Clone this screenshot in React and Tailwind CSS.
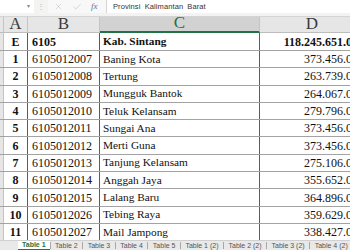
import React from "react";
import { X, Check } from "lucide-react";

const rows = [
  ["1", "6105012007", "Baning Kota", "373.456.000"],
  ["2", "6105012008", "Tertung", "263.739.000"],
  ["3", "6105012009", "Mungguk Bantok", "264.067.000"],
  ["4", "6105012010", "Teluk Kelansam", "279.796.000"],
  ["5", "6105012011", "Sungai Ana", "373.456.000"],
  ["6", "6105012012", "Merti Guna", "373.456.000"],
  ["7", "6105012013", "Tanjung Kelansam", "275.106.000"],
  ["8", "6105012014", "Anggah Jaya", "355.652.000"],
  ["9", "6105012015", "Lalang Baru", "364.896.000"],
  ["10", "6105012026", "Tebing Raya", "359.629.000"],
  ["11", "6105012027", "Mail Jampong", "338.427.000"],
];

const tabs = [
  "Table 2",
  "Table 3",
  "Table 4",
  "Table 5",
  "Table 1 (2)",
  "Table 2 (2)",
  "Table 3 (2)",
  "Table 4 (2)",
];

function Row({ no, code, name, value, bold, first }) {
  const w = bold ? "font-bold" : "font-normal";
  return (
    <div
      className={`flex shrink-0 border-b border-[#a3a3a3] ${
        first ? "h-[18px]" : "h-[17.3px]"
      }`}
    >
      <div className="w-[4px] shrink-0 bg-[#e6e6e6] border-r border-[#c4c4c4]" />
      <div className="w-[24px] shrink-0 flex items-center justify-center border-r border-[#5c5c5c] font-bold text-[12px]">
        {no}
      </div>
      <div
        className={`w-[72px] shrink-0 flex items-center pl-[4px] border-r border-[#5c5c5c] text-[12px] ${w}`}
      >
        {code}
      </div>
      <div
        className={`w-[160px] shrink-0 flex items-center pl-[3px] border-r border-[#5c5c5c] text-[11.3px] whitespace-nowrap overflow-hidden ${w}`}
      >
        {name}
      </div>
      <div
        className={`w-[107px] shrink-0 flex items-center justify-end pr-[2px] border-r border-[#5c5c5c] text-[12px] whitespace-nowrap ${w}`}
      >
        {value}
      </div>
    </div>
  );
}

export default function App() {
  return (
    <div className="w-[350px] h-[250px] overflow-hidden bg-white flex flex-col font-['Liberation_Serif',serif] text-[#111]">
      {/* formula bar */}
      <div className="h-[17px] shrink-0 flex bg-[#f3f3f3] border-b border-[#d4d4d4] pb-[3px]">
        <div className="w-[34px] shrink-0 bg-white flex items-center justify-end pr-[4px] text-[6px] text-[#888] font-['Liberation_Sans',sans-serif]">
          ▾
        </div>
        <div className="w-[14px] shrink-0 flex items-center justify-center text-[8px] text-[#b5b5b5] font-['Liberation_Sans',sans-serif]">
          ⋮
        </div>
        <div className="w-[58px] shrink-0 flex items-center gap-[9px] pl-[6px] bg-[#f8f8f8]">
          <X size={9} strokeWidth={1.3} color="#b8b8b8" />
          <Check size={10} strokeWidth={1.3} color="#b8b8b8" />
          <span className="italic text-[9px] text-[#707070]">fx</span>
        </div>
        <div className="flex-1 bg-white border-l border-[#d4d4d4] flex items-center pl-[6px] text-[7.5px] text-[#333] font-['Liberation_Sans',sans-serif] tracking-[0.1px] [word-spacing:2px]">
          Provinsi Kalimantan Barat
        </div>
      </div>

      {/* column headers */}
      <div className="h-[16px] shrink-0 flex bg-[#e6e6e6] text-[17px] leading-none text-[#3a3a3a]">
        <div className="w-[4px] shrink-0 border-r border-[#c4c4c4] border-b border-b-[#bdbdbd]" />
        <div className="w-[24px] shrink-0 flex items-end justify-center border-r border-[#c4c4c4] border-b border-b-[#bdbdbd]">
          A
        </div>
        <div className="w-[72px] shrink-0 flex items-end justify-center border-r border-[#c4c4c4] border-b border-b-[#bdbdbd]">
          B
        </div>
        <div className="w-[160px] shrink-0 flex items-end justify-center bg-[#d2d2d2] text-[#217346] border-r border-[#c4c4c4] border-b-2 border-b-[#217346]">
          C
        </div>
        <div className="w-[104px] shrink-0 flex items-end justify-center border-b border-b-[#bdbdbd]">
          D
        </div>
      </div>

      {/* sheet */}
      <div className="flex-1 overflow-hidden flex flex-col">
        <Row no="E" code="6105" name="Kab.  Sintang" value="118.245.651.000" bold first />
        {rows.map((r) => (
          <Row key={r[0]} no={r[0]} code={r[1]} name={r[2]} value={r[3]} />
        ))}
      </div>

      {/* sheet tabs */}
      <div className="h-[10px] shrink-0 flex items-stretch bg-[#e9e9e9] border-t border-[#d0d0d0] text-[7px] leading-[8px] text-[#555] font-['Liberation_Sans',sans-serif] whitespace-nowrap">
        <div className="w-[18px] shrink-0" />
        <div className="shrink-0 bg-white px-[4px] flex items-center font-bold text-[#217346] border-b border-[#217346]">
          Table 1
        </div>
        {tabs.map((t) => (
          <div key={t} className="shrink-0 flex items-center px-[4.5px] border-l border-[#a8a8a8] my-[1px]">
            {t}
          </div>
        ))}
      </div>
    </div>
  );
}
